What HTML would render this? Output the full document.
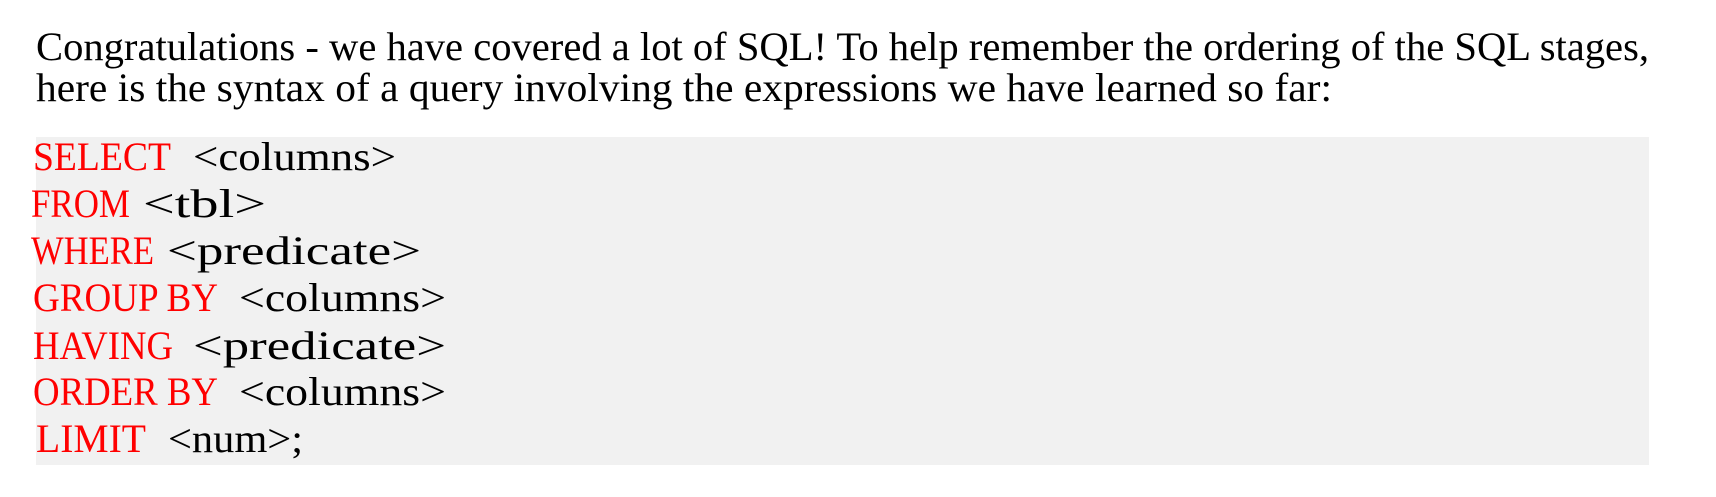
<!DOCTYPE html>
<html><head><meta charset="utf-8"><style>
html,body{margin:0;padding:0;background:#fff;width:1716px;height:497px;overflow:hidden}
svg{display:block}
text{font-family:"Liberation Serif",serif;font-size:40px}
.r{fill:#ff0000}
.k{fill:#000}
</style></head><body>
<svg width="1716" height="497" viewBox="0 0 1716 497">
<rect x="36" y="137" width="1613" height="328" fill="#f1f1f1"/>
<text class="k" x="36" y="60" textLength="1613" lengthAdjust="spacingAndGlyphs">Congratulations - we have covered a lot of SQL! To help remember the ordering of the SQL stages,</text>
<text class="k" x="36" y="101" textLength="1296" lengthAdjust="spacingAndGlyphs">here is the syntax of a query involving the expressions we have learned so far:</text>

<text class="r" x="33" y="170" textLength="138" lengthAdjust="spacingAndGlyphs">SELECT</text>
<text class="k" x="193" y="170" textLength="203" lengthAdjust="spacingAndGlyphs">&lt;columns&gt;</text>

<text class="r" x="31" y="217" textLength="99" lengthAdjust="spacingAndGlyphs">FROM</text>
<text class="k" x="143" y="217" textLength="123" lengthAdjust="spacingAndGlyphs">&lt;tbl&gt;</text>

<text class="r" x="31" y="264" textLength="123" lengthAdjust="spacingAndGlyphs">WHERE</text>
<text class="k" x="167" y="264" textLength="254" lengthAdjust="spacingAndGlyphs">&lt;predicate&gt;</text>

<text class="r" x="33" y="311" textLength="185" lengthAdjust="spacingAndGlyphs">GROUP BY</text>
<text class="k" x="239" y="311" textLength="207" lengthAdjust="spacingAndGlyphs">&lt;columns&gt;</text>

<text class="r" x="33" y="359" textLength="140" lengthAdjust="spacingAndGlyphs">HAVING</text>
<text class="k" x="193" y="359" textLength="253" lengthAdjust="spacingAndGlyphs">&lt;predicate&gt;</text>

<text class="r" x="33" y="405" textLength="185" lengthAdjust="spacingAndGlyphs">ORDER BY</text>
<text class="k" x="239" y="405" textLength="207" lengthAdjust="spacingAndGlyphs">&lt;columns&gt;</text>

<text class="r" x="36" y="452" textLength="110" lengthAdjust="spacingAndGlyphs">LIMIT</text>
<text class="k" x="168" y="452" textLength="135" lengthAdjust="spacingAndGlyphs">&lt;num&gt;;</text>
</svg>
</body></html>
